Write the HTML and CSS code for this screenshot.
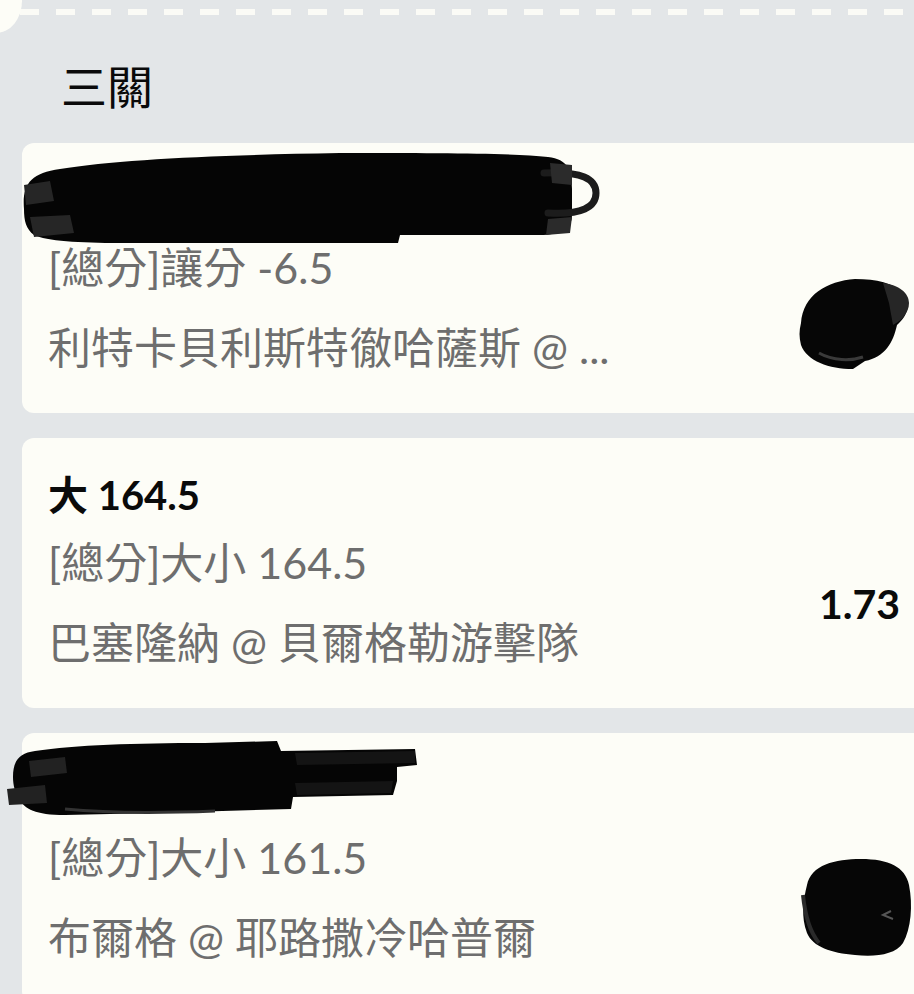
FILE: index.html
```html
<!DOCTYPE html>
<html lang="zh-Hant">
<head>
    <meta charset="UTF-8">
    <meta name="viewport" content="width=device-width, initial-scale=1.0">
    <title>三關</title>
    <link rel="stylesheet" href="styles.css">
</head>
<body>

    <!-- Ticket edge -->
    <div class="perforation"></div>

    <h2 class="section-title">三關</h2>

    <div class="leg-list">

        <!-- Leg 1 -->
        <div class="leg-card">
            <div class="leg-pick leg-pick-hidden"></div>
            <div class="leg-row">
                <div class="leg-info">
                    <p class="leg-market">[總分]讓分 -6.5</p>
                    <p class="leg-match">利特卡貝利斯特徹哈薩斯 @ ...</p>
                </div>
                <div class="leg-odds"></div>
            </div>

            <svg class="scribble scribble-pick-1" width="600" height="95" viewBox="0 0 600 95">
                <path d="M4 60 C2 36 10 24 40 20 C100 10 200 6 320 4 C420 4 490 4 528 8 C548 10 552 22 552 40 L552 66 C552 80 540 86 520 86 L380 86 L378 94 L100 94 C60 94 26 92 14 86 C6 80 4 72 4 60 Z" fill="#050505"/>
                <path d="M4 36 L30 32 L34 52 L6 56 Z M10 68 L50 66 L54 84 L14 88 Z" fill="#262626"/>
                <path d="M524 24 C562 22 576 30 576 44 C576 58 562 66 528 64" fill="none" stroke="#1c1c1c" stroke-width="7" stroke-linecap="round"/>
                <path d="M530 14 L552 16 L552 36 L532 34 Z M528 70 L552 68 L550 84 L526 86 Z" fill="#2b2b2b"/>
            </svg>
            <svg class="scribble scribble-odds-1" width="120" height="95" viewBox="0 0 120 95">
                <path d="M8 48 C10 20 34 6 62 4 C84 4 100 8 110 18 C118 26 116 40 104 50 C100 68 92 82 72 86 L60 94 C36 94 14 86 8 70 C6 62 6 56 8 48 Z" fill="#060606"/>
                <path d="M90 8 C106 10 116 18 116 28 C116 38 108 46 100 50 L96 28 Z" fill="#262626"/>
                <path d="M26 78 C40 86 58 86 70 82" fill="none" stroke="#3a3a3a" stroke-width="3"/>
            </svg>
        </div>

        <!-- Leg 2 -->
        <div class="leg-card">
            <div class="leg-pick">大 164.5</div>
            <div class="leg-row">
                <div class="leg-info">
                    <p class="leg-market">[總分]大小 164.5</p>
                    <p class="leg-match">巴塞隆納 @ 貝爾格勒游擊隊</p>
                </div>
                <div class="leg-odds">1.73</div>
            </div>
        </div>

        <!-- Leg 3 -->
        <div class="leg-card">
            <div class="leg-pick leg-pick-hidden"></div>
            <div class="leg-row">
                <div class="leg-info">
                    <p class="leg-market">[總分]大小 161.5</p>
                    <p class="leg-match">布爾格 @ 耶路撒冷哈普爾</p>
                </div>
                <div class="leg-odds"></div>
            </div>

            <svg class="scribble scribble-pick-3" width="425" height="80" viewBox="0 0 425 80">
                <path d="M8 40 C8 24 14 16 30 14 C70 8 130 6 200 6 L272 4 L276 14 L410 12 L412 28 L392 30 L392 44 L388 58 L288 60 L286 72 L150 76 L60 78 C30 78 20 72 14 62 C10 56 8 48 8 40 Z" fill="#050505"/>
                <path d="M2 52 L40 48 L42 66 L4 68 Z M24 24 L60 20 L62 36 L26 40 Z" fill="#222"/>
                <path d="M290 16 L410 14 L410 26 L292 28 Z M290 46 L388 44 L386 56 L292 58 Z" fill="#141414"/>
                <path d="M60 72 C100 76 160 76 210 74" fill="none" stroke="#333" stroke-width="3"/>
            </svg>
            <svg class="scribble scribble-odds-3" width="120" height="105" viewBox="0 0 120 105">
                <path d="M12 30 C16 10 40 4 66 4 C94 4 110 12 114 30 C118 50 116 74 108 88 C100 100 80 102 60 100 C36 98 18 92 12 78 C6 62 8 46 12 30 Z" fill="#060606"/>
                <path d="M96 56 L88 60 L98 64" fill="none" stroke="#555" stroke-width="2"/>
                <path d="M8 40 C10 60 14 76 24 88" fill="none" stroke="#2a2a2a" stroke-width="4"/>
            </svg>
        </div>

    </div>

</body>
</html>
```

FILE: styles.css
```css
/* General Styles */
body {
    margin: 0;
    padding: 0;
    background-color: #e3e6e8;
    font-family: 'Lato', 'Noto Sans CJK TC', sans-serif;
    overflow: hidden;
    height: 994px;
}

/* Ticket edge with dashes and notch */
.perforation {
    position: relative;
    height: 6px;
    margin-top: 9px;
    background-image: linear-gradient(to right, #fbfbf6 19px, transparent 19px);
    background-size: 36px 6px;
    background-position: 20px 0;
}

.perforation::before {
    content: '';
    position: absolute;
    left: -30px;
    top: -40px;
    width: 52px;
    height: 64px;
    border-radius: 50%;
    background-color: #fdfdf7;
}

.section-title {
    margin: 38px 0 0 61px;
    font-family: 'Noto Sans CJK TC', sans-serif;
    font-weight: 400;
    font-size: 46px;
    line-height: 62px;
    color: #0a0a0a;
}

/* Legs */
.leg-list {
    display: flex;
    flex-direction: column;
    gap: 25px;
    margin: 28px -12px 0 22px;
}

.leg-card {
    position: relative;
    height: 270px;
    box-sizing: border-box;
    padding: 30px 26px 0 26px;
    background-color: #fdfdf7;
    border-radius: 12px;
}

.leg-pick {
    height: 54px;
    font-size: 40px;
    line-height: 54px;
    font-weight: 700;
    color: #0a0a0a;
}

.leg-row {
    display: flex;
    align-items: center;
    justify-content: space-between;
    margin-top: 13px;
}

.leg-info {
    display: flex;
    flex-direction: column;
    gap: 24px;
}

.leg-market,
.leg-match {
    margin: 0;
    font-size: 43px;
    line-height: 56px;
    color: #6e6e6e;
    white-space: nowrap;
}

.leg-odds {
    font-size: 41px;
    font-weight: 700;
    color: #0a0a0a;
}

/* Redaction marks */
.scribble {
    position: absolute;
    display: block;
}

.scribble-pick-1 {
    left: -2px;
    top: 6px;
}

.scribble-odds-1 {
    left: 771px;
    top: 132px;
}

.scribble-pick-3 {
    left: -17px;
    top: 4px;
}

.scribble-odds-3 {
    left: 773px;
    top: 122px;
}
```
